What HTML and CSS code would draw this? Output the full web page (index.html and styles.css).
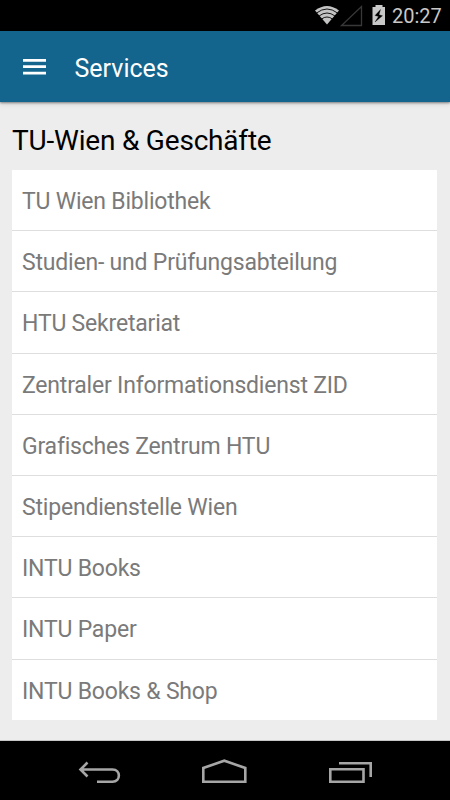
FILE: index.html
```html
<!DOCTYPE html>
<html lang="de">
<head>
<meta charset="utf-8">
<title>Services</title>
<link rel="stylesheet" href="styles.css">
</head>
<body>
<div class="screen">
  <div class="status">
    <svg class="status-icons" width="90" height="31" viewBox="0 0 90 31">
      <path d="M1 10.500Q13 1.500 25 10.500L13 24.500Z" fill="#c4c4c4"/>
      <path d="M2.500 13Q13 5 23.500 13M5 16Q13 10 21 16M7.500 19Q13 15 18.500 19" fill="none" stroke="#000" stroke-width=".9"/>
      <path d="M27.500 25.500H47.500V6.500Z" fill="none" stroke="#383838" stroke-width="1.300"/>
      <path d="M58.500 7H61.500V5H68.500V7H71V25H58.500Z" fill="#c8c8c8"/>
      <path d="M66.500 9.500L61 15.500L64.500 16.500L61 22L68.500 15.800L65 14.700Z" fill="#000" stroke="#000" stroke-width=".3"/>
    </svg>
    <span class="clock">20:27</span>
  </div>
  <header class="appbar">
    <svg class="menu" width="23" height="16" viewBox="0 0 23 16" fill="#fff">
      <path d="M0 0H23V2.700H0ZM0 6.300H23V9H0ZM0 12.700H23V15.400H0Z"/>
    </svg>
    <h1>Services</h1>
  </header>
  <main class="content">
    <h2>TU-Wien &amp; Geschäfte</h2>
    <ul class="list">
      <li>TU Wien Bibliothek</li>
      <li>Studien- und Prüfungsabteilung</li>
      <li>HTU Sekretariat</li>
      <li>Zentraler Informationsdienst ZID</li>
      <li>Grafisches Zentrum HTU</li>
      <li>Stipendienstelle Wien</li>
      <li>INTU Books</li>
      <li>INTU Paper</li>
      <li>INTU Books &amp; Shop</li>
    </ul>
  </main>
  <nav class="navbar">
    <svg width="450" height="59" viewBox="0 741 450 59" fill="none" stroke="#a6a6a6" stroke-width="2.600">
      <path d="M87.500 762.500L80.500 769.500L87.500 776.500M80.500 769.500H112.500C121 769.500 121 781.700 112.500 781.700H97"/>
      <path d="M203.300 781.700V768L224.300 760.700L245.300 768V781.700Z"/>
      <path d="M330.300 769.300H363.500V781.700H330.300ZM339 763.300H370.700V777"/>
    </svg>
  </nav>
</div>
</body>
</html>
```
FILE: styles.css
```css
* { box-sizing: border-box; }
body { margin: 0; font-family: Roboto, sans-serif; }
.screen { width: 450px; height: 800px; display: flex; flex-direction: column; background: #ededed; overflow: hidden; }
.status { height: 31px; background: #000; display: flex; padding-left: 314px; color: #c8c8c8; }
.status-icons { flex: none; margin-right: -12px; }
.clock { font-size: 20px; line-height: 32px; white-space: nowrap; }
.appbar { height: 71px; flex: none; background: #13658d; display: flex; align-items: center; padding: 0 23px; box-shadow: 0 1px 2px rgba(0,0,0,.4), 0 2px 5px rgba(0,0,0,.12); }
.menu { flex: none; margin: 1px 28.500px 0 0; }
h1 { margin: 5px 0 0; font-size: 25px; line-height: 30px; font-weight: 400; color: #fff; }
.content { height: 638px; padding: 18px 13px 0 12px; }
h2 { margin: 0; height: 50px; font-size: 28px; line-height: 41px; font-weight: 400; letter-spacing: -.2px; color: #000; white-space: nowrap; }
.list { list-style: none; margin: 0; padding: 0; height: 550px; background: #fff; display: grid; grid-template-rows: repeat(8, 61.200px) 1fr; }
.list li { padding: 2px 0 0 10px; font-size: 23px; line-height: 59.200px; letter-spacing: -.2px; color: #7a7a7a; border-bottom: 1px solid #dedede; white-space: nowrap; }
.list li:last-child { border-bottom: 0; }
.navbar { height: 60px; background: #000; border-top: 1px solid #c6c6c6; }
.navbar svg { display: block; }
```
